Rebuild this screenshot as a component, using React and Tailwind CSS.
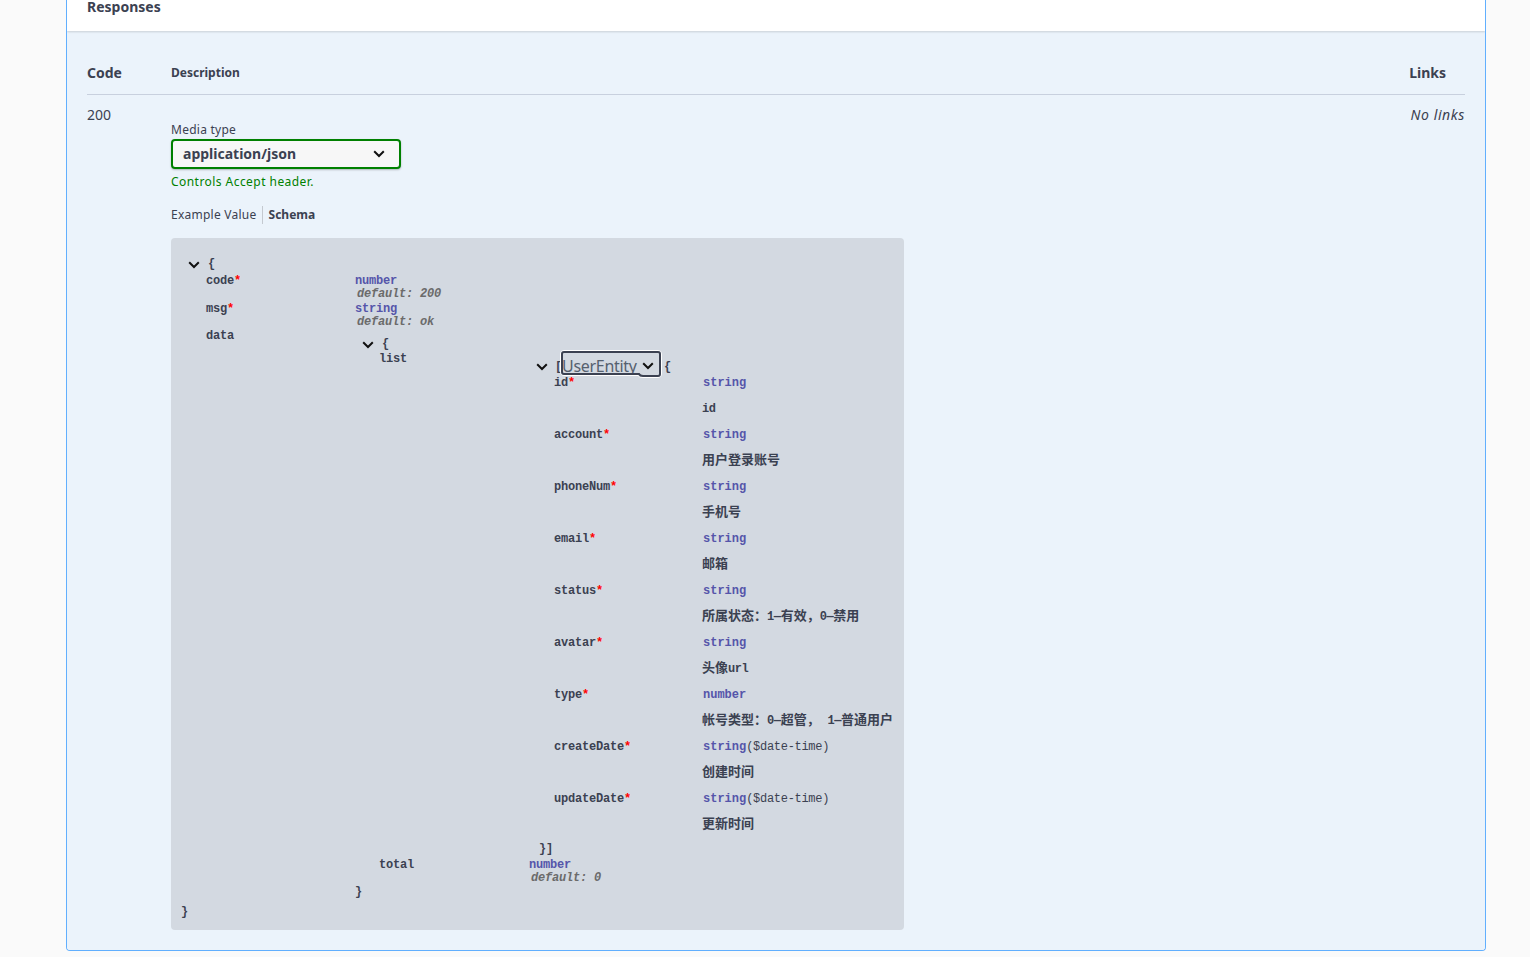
import React from "react";

const sans = { fontFamily: '"Noto Sans","Noto Sans CJK SC",sans-serif' };

function Chevron({ className = "" }) {
  return (
    <svg viewBox="0 0 12 8" className={"h-[8px] w-[12px] shrink-0 " + className} fill="none" stroke="#111" strokeWidth="2">
      <path d="M1.2 1.3 6 6 10.8 1.3" />
    </svg>
  );
}

function Star() {
  return <span className="text-[#ff0000]">*</span>;
}

function Type({ children }) {
  return <span className="text-[#55a]">{children}</span>;
}

function Default({ children }) {
  return <div className="ml-[2px] italic text-[#6b6b6b]">default: {children}</div>;
}

function L({ children }) {
  return <span className="text-[12px] tracking-[-0.4px]">{children}</span>;
}

const props = [
  ["id", "string", <L>id</L>],
  ["account", "string", "用户登录账号"],
  ["phoneNum", "string", "手机号"],
  ["email", "string", "邮箱"],
  ["status", "string", <>所属状态：<L>1—</L>有效，<L>0—</L>禁用</>],
  ["avatar", "string", <>头像<L>url</L></>],
  ["type", "number", <>帐号类型：<L>0—</L>超管， <L>1—</L>普通用户</>],
  ["createDate", "string", "创建时间", "($date-time)"],
  ["updateDate", "string", "更新时间", "($date-time)"],
];

function Model() {
  return (
    <div
      className="text-[12px] font-bold leading-[13px] text-[#3b4151] tracking-[-0.2px]"
      style={{ fontFamily: '"Liberation Mono","Noto Sans CJK SC",monospace' }}
    >
      <div className="flex h-[17px] items-start pl-[7px]">
        <Chevron className="mt-[3px]" />
        <span className="ml-[8px]">{"{"}</span>
      </div>
      <div className="pl-[25px]">
        <div className="flex h-[28px]">
          <div className="w-[149px]">code<Star /></div>
          <div><Type>number</Type><Default>200</Default></div>
        </div>
        <div className="flex h-[27px]">
          <div className="w-[149px]">msg<Star /></div>
          <div><Type>string</Type><Default>ok</Default></div>
        </div>
        <div className="flex">
          <div className="w-[149px]">data</div>
          <div>
            <div className="flex h-[23px] items-center pl-[7px] pt-[6px]">
              <Chevron />
              <span className="ml-[8px]">{"{"}</span>
            </div>
            <div className="pl-[24px]">
              <div className="flex h-[506px]">
                <div className="w-[150px]">list</div>
                <div className="pt-[8px]">
                  <div className="flex h-[12px] items-center pl-[7px]">
                    <Chevron />
                    <span className="ml-[7px]">[</span>
                    <div className="relative mt-[-6px] ml-[-2px] flex h-[28px] w-[102px] items-center pl-[2px] pr-[8px] pt-[4px]">
                      <span className="text-[16px] font-normal leading-[20px] tracking-[-0.3px] text-[#55606e]" style={sans}>UserEntity</span>
                      <Chevron className="ml-auto" />
                      <svg viewBox="0 0 102 28" className="absolute left-0 top-0 h-[28px] w-[102px]" fill="none">
                        <path d="M4 .5H98Q101.5 .5 101.5 4V24Q101.5 27.5 98 27.5H83Q79 27.5 78 25.5H4Q.5 25.5 .5 22V4Q.5 .5 4 .5Z" stroke="#fff" strokeWidth="1" />
                        <path d="M4 2H98Q100 2 100 4V24Q100 26 98 26H83Q80 26 79 24H4Q2 24 2 22V4Q2 2 4 2Z" stroke="#3b4151" strokeWidth="2" />
                      </svg>
                    </div>
                    <span className="ml-[2px]">{"{"}</span>
                  </div>
                  <div className="pl-[25px]">
                    {props.map(([name, type, desc, fmt]) => (
                      <div key={name} className="flex h-[52px] pt-[4px]">
                        <div className="w-[149px] tracking-[-0.2px]">{name}<Star /></div>
                        <div className="flex flex-col gap-[12px] tracking-normal">
                          <div className="whitespace-nowrap"><Type>{type}</Type><span className="font-normal tracking-[-0.3px]">{fmt}</span></div>
                          <div className="whitespace-nowrap text-[13px] ml-[-1px]">{desc}</div>
                        </div>
                      </div>
                    ))}
                  </div>
                  <div className="ml-[10px] mt-[2px] h-[14px]">{"}]"}</div>
                </div>
              </div>
              <div className="flex h-[27px]">
                <div className="w-[150px]">total</div>
                <div><Type>number</Type><Default>0</Default></div>
              </div>
            </div>
            <div className="h-[13px]">{"}"}</div>
          </div>
        </div>
      </div>
      <div className="mt-[7px]">{"}"}</div>
    </div>
  );
}

export default function App() {
  return (
    <div className="h-[957px] overflow-hidden bg-[#fafafa] pl-[66px]" style={sans}>
      <div className="w-[1420px] overflow-hidden rounded-b-[4px] border-x border-b border-[#61affe]">
        <div className="relative h-[31px] overflow-hidden bg-white pl-[20px] shadow-[0_1px_2px_rgba(0,0,0,0.15)]">
          <h4 className="mt-[-3px] text-[14px] font-bold leading-[20px] text-[#3b4151]">Responses</h4>
        </div>
        <div className="h-[919px] bg-[#ebf3fb] px-[20px] text-[#3b4151]">
          <div className="flex h-[64px] items-end justify-between border-b border-[#c8d0de] pb-[11px]">
            <div className="flex items-end">
              <div className="w-[84px] text-[14px] font-bold leading-[20px]">Code</div>
              <div className="text-[12px] font-bold leading-[20px]">Description</div>
            </div>
            <div className="mr-[19px] text-[14px] font-bold leading-[20px]">Links</div>
          </div>
          <div className="flex pt-[10px]">
            <div className="w-[84px] text-[14px] leading-[20px]">200</div>
            <div className="flex-1">
              <div className="mt-[17px] text-[12px] leading-[16px] tracking-[0.25px]">Media type</div>
              <div className="mt-[1px] flex h-[30px] w-[230px] items-center justify-between rounded-[4px] border-2 border-[#008000] bg-[#f7f7f7] pl-[10px] pr-[14px] shadow-[0_1px_2px_rgba(0,0,0,0.25)]">
                <span className="text-[14px] font-bold leading-[20px]">application/json</span>
                <Chevron className="h-[7px] w-[10px]" />
              </div>
              <div className="mt-[5px] text-[12px] leading-[16px] tracking-[0.45px] text-[#008000]">Controls Accept header.</div>
              <div className="mt-[16px] flex h-[18px] items-center text-[12px]">
                <span className="pr-[5px] tracking-[0.25px]">Example Value</span>
                <span className="border-l border-[#c4c9d0] pl-[6px] font-bold">Schema</span>
              </div>
              <div className="mt-[14px] h-[692px] w-[733px] rounded-[4px] bg-[#d3d9e1] pl-[10px] pt-[20px]">
                <Model />
              </div>
            </div>
            <div className="text-[14px] italic leading-[20px] tracking-[0.6px]">No links</div>
          </div>
        </div>
      </div>
    </div>
  );
}
